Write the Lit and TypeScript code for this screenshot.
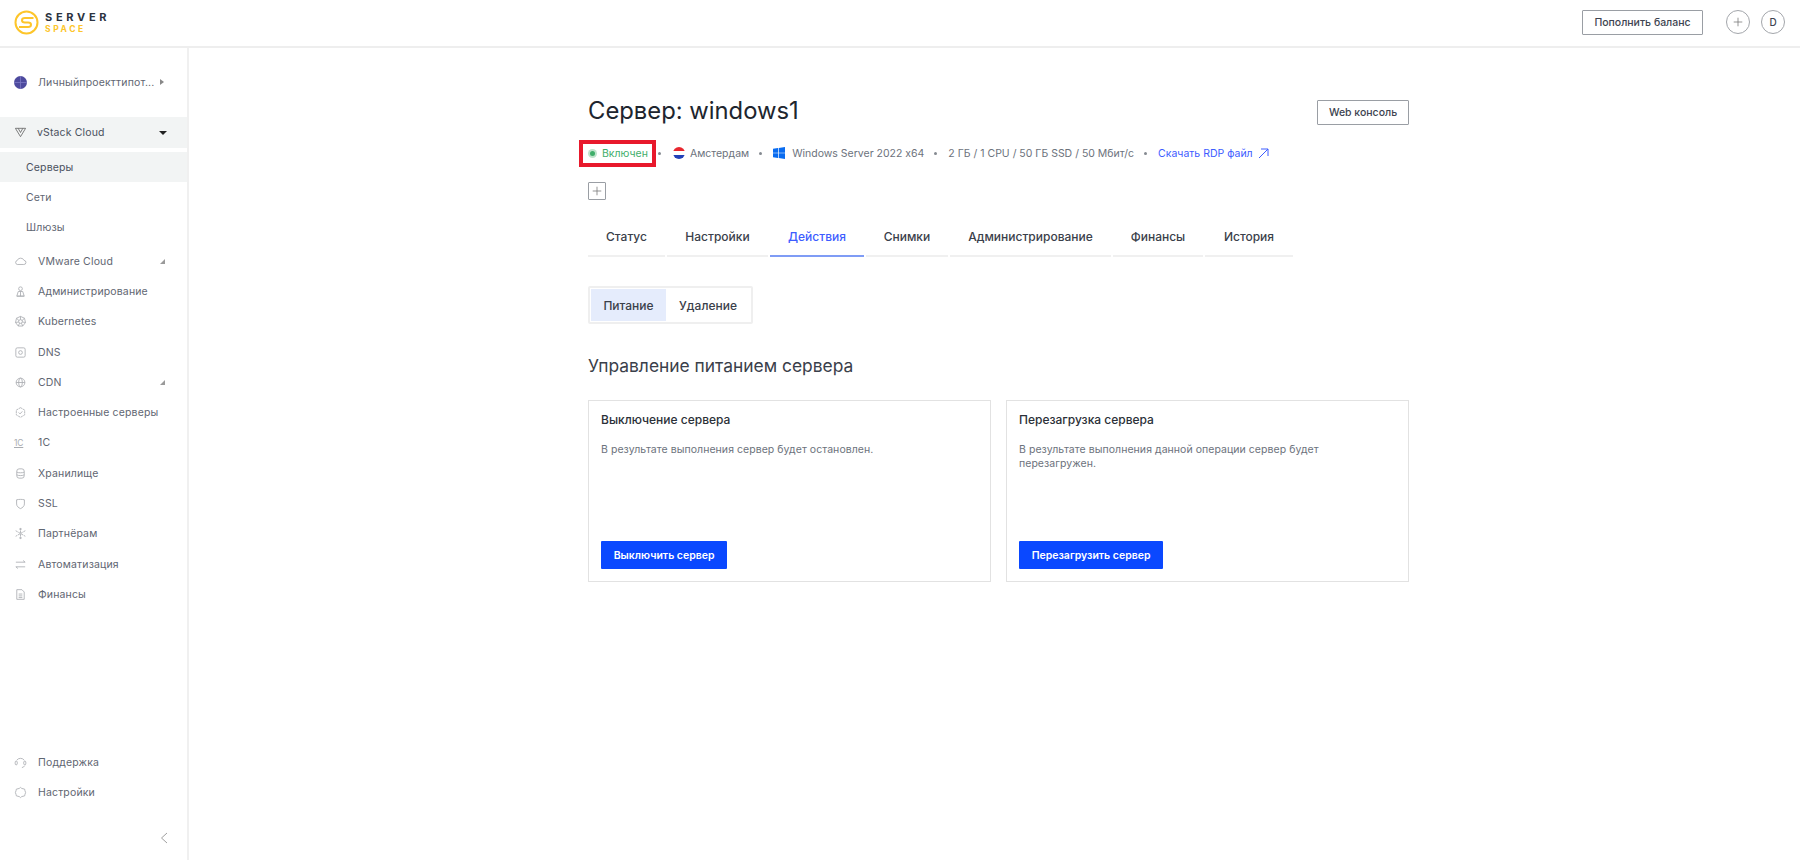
import { LitElement, html, css, svg } from "lit";
import { customElement } from "lit/decorators.js";

const S = (inner: unknown, size = 13) => html`<svg class="ic" width=${size} height=${size} viewBox="0 0 14 14" fill="none" stroke="#a9acb1" stroke-width="0.9">${inner}</svg>`;

const icons: Record<string, unknown> = {
  cloud: svg`<path d="M3.500 10.200h7a2.200 2.200 0 0 0 .3-4.400A3.900 3.900 0 0 0 7 3.400a3.700 3.700 0 0 0-3.500 2.500 2.200 2.200 0 0 0 0 4.300z"/>`,
  admin: svg`<circle cx="7" cy="4" r="2"/><path d="M3 12l1.600-5h4.800L11 12zM3 12h8M7 7v5"/>`,
  k8s: svg`<circle cx="7" cy="7" r="2"/><path d="M7 1.500l4.300 2 1.100 4.600-3 3.800H4.600l-3-3.800 1.100-4.600zM7 1.500V5M2.700 3.500L5.400 6M11.300 3.500L8.600 6M1.600 8.100l3.500-.6M12.400 8.100l-3.500-.6M4.600 11.900L6 8.800M9.400 11.900L8 8.800"/>`,
  dns: svg`<rect x="2" y="2" width="10" height="10" rx="1.500"/><circle cx="7" cy="7" r="2"/>`,
  globe: svg`<circle cx="7" cy="7" r="4.700"/><ellipse cx="7" cy="7" rx="2" ry="4.700"/><path d="M2.300 7h9.400"/>`,
  hex: svg`<path d="M7 1.800l4.500 2.600v5.200L7 12.200 2.500 9.600V4.400z" stroke-dasharray="2.500 .7"/><path d="M5 7l1.500 1.500L9 5.800"/>`,
  db: svg`<rect x="3" y="2" width="8" height="10" rx="2.500"/><path d="M3 5.500c1.500 1 6.500 1 8 0M3 8.500c1.500 1 6.500 1 8 0"/>`,
  shield: svg`<path d="M2.800 3c2.800-.6 5.600-.6 8.400 0v4.500c0 2.500-2 4-4.200 5-2.200-1-4.200-2.500-4.200-5z"/>`,
  snow: svg`<path d="M7 1v12M1.800 4l10.400 6M12.200 4L1.800 10" stroke-dasharray="2.500 .8"/><path d="M5.500 1.800L7 3.200l1.500-1.400M5.500 12.200L7 10.800l1.500 1.400"/>`,
  swap: svg`<path d="M2 4.500h10M9.800 2.700L12 4.500M12 9.500H2M4.200 11.300L2 9.500"/>`,
  doc: svg`<path d="M3 1.800h5.500L11 4.300v7.900H3zM5 6.500h4M5 8.500h4M5 10.300h4"/>`,
  support: svg`<path d="M3 4.500A5 5 0 0 1 11 4.500M11.500 10.500c-.6 1-1.500 1.700-3 2"/><rect x="1.300" y="5.500" width="2.200" height="4" rx="1.100"/><rect x="10.500" y="5.500" width="2.200" height="4" rx="1.100"/>`,
  gear: svg`<path d="M7 1.500l1.300 1.100 3.200.8.300 1.700L12.500 7l-.7 2.100-.3 1.500-3.200.8L7 12.500l-1.300-1.100-3.200-.8-.3-1.500L1.500 7l.7-1.900.3-1.700 3.200-.8z"/>`,
};

const one_c = html`<span class="onec">1C</span>`;

const nav: [string, string, boolean?][] = [
  ["VMware Cloud", "cloud", true],
  ["Администрирование", "admin"],
  ["Kubernetes", "k8s"],
  ["DNS", "dns"],
  ["CDN", "globe", true],
  ["Настроенные серверы", "hex"],
  ["1C", "1c"],
  ["Хранилище", "db"],
  ["SSL", "shield"],
  ["Партнёрам", "snow"],
  ["Автоматизация", "swap"],
  ["Финансы", "doc"],
];

const tabs: [string, number, boolean?][] = [
  ["Статус", 77],
  ["Настройки", 101],
  ["Действия", 94, true],
  ["Снимки", 82],
  ["Администрирование", 161],
  ["Финансы", 90],
  ["История", 88],
];

@customElement("app-root")
export class AppRoot extends LitElement {
  static styles = css`
    :host { display: block; width: 1800px; height: 860px; background: #fff; font-family: Inter, "Noto Sans", sans-serif; font-feature-settings: "calt" 0; overflow: hidden; color: #2b3038; }
    * { box-sizing: border-box; }
    .ic { flex: none; display: block; }
    header { height: 48px; border-bottom: 2px solid #eeeeee; display: flex; align-items: center; padding: 0 15px 2px 14px; }
    .logo { display: flex; align-items: center; gap: 6px; }
    .logo-text { display: flex; flex-direction: column; gap: 3px; }
    .logo-s { font-size: 11px; line-height: 10px; font-weight: 700; letter-spacing: 3.700px; color: #2c3340; }
    .logo-p { font-size: 8.500px; line-height: 8px; font-weight: 700; letter-spacing: 2.600px; color: #fdc52a; }
    .head-right { margin-left: auto; display: flex; align-items: center; }
    .btn-o { height: 25px; border: 1px solid #9a9ea4; border-radius: 1px; background: #fff; font: 500 10.500px Inter, sans-serif; color: #3d4450; display: flex; align-items: center; justify-content: center; }
    .topup { width: 121px; margin-right: 23px; }
    .circle { width: 24px; height: 24px; border: 1px solid #a3a6ab; border-radius: 50%; display: flex; align-items: center; justify-content: center; font-size: 10px; font-weight: 500; color: #3d4450; }
    .circle + .circle { margin-left: 11px; }
    .body { display: flex; height: 812px; }
    aside { width: 189px; border-right: 2px solid #f0f0f0; display: flex; flex-direction: column; flex: none; font-size: 10.500px; color: #5f6672; letter-spacing: .15px; }
    .project { height: 22px; margin-top: 23px; display: flex; align-items: center; padding-left: 14px; gap: 11px; margin-bottom: 24px; letter-spacing: .17px; }
    .tri-r { width: 0; height: 0; border-left: 4px solid #888; border-top: 3.500px solid transparent; border-bottom: 3.500px solid transparent; margin-left: -6px; }
    .vstack { height: 31px; background: #f2f4f4; display: flex; align-items: center; padding: 0 20px 0 14px; gap: 10px; color: #4a515e; }
    .tri-d { width: 0; height: 0; border-top: 4px solid #222; border-left: 4px solid transparent; border-right: 4px solid transparent; margin-left: auto; }
    .sub { height: 30px; display: flex; align-items: center; padding-left: 26px; }
    .sub.on { background: #f2f4f4; margin-top: 4px; color: #4a515e; }
    .subs { margin-bottom: 4px; }
    .item { height: 30.300px; display: flex; align-items: center; padding: 0 22px 0 14px; gap: 11px; }
    .item .tt { flex: none; }
    .corner { width: 0; height: 0; margin-left: auto; border-bottom: 5px solid #9a9a9a; border-left: 5px solid transparent; }
    .onec { width: 13px; flex: none; font-size: 8.500px; color: #a9acb1; letter-spacing: -.2px; text-decoration: underline; }
    .foot { margin-top: auto; }
    .collapse { display: flex; justify-content: flex-end; padding: 24px 19px 0 0; height: 52px; }
    main { flex: 1; padding: 0 0 0 399px; }
    .wrap { width: 821px; }
    .title-row { display: flex; justify-content: space-between; align-items: center; height: 30px; margin-top: 48px; }
    h1 { margin: 0; font-size: 23.800px; font-weight: 400; line-height: 30px; color: #20252e; }
    .web { width: 92px; margin-top: 3px; }
    .meta { position: relative; display: flex; align-items: center; height: 20px; margin-top: 17px; font-size: 10.500px; color: #6c727c; }
    .dot { width: 3px; height: 3px; border-radius: 50%; background: #858a91; margin: 0 11px 0 10px; flex: none; }
    .status { color: #3fae6a; display: flex; align-items: center; gap: 5px; }
    .sd { width: 9px; height: 9px; border-radius: 50%; background: #bfe3cb; display: flex; align-items: center; justify-content: center; }
    .sd i { width: 5px; height: 5px; border-radius: 50%; background: #3fae6a; display: block; }
    .flag { width: 12px; height: 12px; border-radius: 50%; overflow: hidden; flex: none; background: linear-gradient(#e8262e 0 33%, #fff 33% 66%, #2140b8 66%); margin: 0 5px 0 1px; }
    .win { margin: 0 7px 0 0; flex: none; }
    .rdp { color: #3d5cff; display: flex; align-items: center; gap: 5px; }
    .mark { position: absolute; left: -9px; top: -3px; width: 77px; height: 27px; border: 4px solid #e8192c; }
    .plus { width: 18px; height: 18px; border: 1px solid #9a9ea4; border-radius: 1px; margin-top: 19px; display: flex; align-items: center; justify-content: center; }
    .tabs { display: flex; gap: 2px; margin-top: 19px; }
    .tab { height: 38px; padding-bottom: 1px; display: flex; align-items: center; justify-content: center; border-bottom: 2px solid #f0f0f0; font-size: 12px; color: #3a404a; font-weight: 500; flex: none; }
    .tab.on { color: #3d5cff; border-bottom-color: #7f9cf5; }
    .seg { display: inline-flex; margin-top: 29px; border: 2px solid #efefef; border-radius: 2px; height: 38px; width: 165px; padding: 1px; }
    .seg div { display: flex; align-items: center; justify-content: center; font-size: 12px; font-weight: 500; color: #3a404a; }
    .seg .a { width: 75px; background: #e5ecfc; }
    .seg .b { flex: 1; }
    h2 { margin: 28px 0 0; font-size: 17.400px; line-height: 28px; font-weight: 400; color: #3a404a; }
    .cards { display: grid; grid-template-columns: 403px 403px; gap: 15px; margin-top: 20px; }
    .card { height: 182px; border: 1px solid #e2e2e2; padding: 10px 12px 12px; display: flex; flex-direction: column; align-items: flex-start; }
    .card h3 { margin: 0; font-size: 12px; line-height: 18px; font-weight: 500; color: #2b3038; }
    .card p { margin: 14px 0 0; font-size: 10.500px; line-height: 14px; width: 340px; color: #6c727c; letter-spacing: .05px; }
    .go { margin-top: auto; height: 28px; background: #0a48ff; color: #fff; border-radius: 1px; font-size: 10.500px; font-weight: 600; display: flex; align-items: center; padding: 0 12.700px; }
  `;

  render() {
    return html`
      <header>
        <div class="logo">
          <svg width="25" height="25" viewBox="0 0 25 25" fill="none" stroke="#fdc52a" stroke-width="2"><circle cx="12.500" cy="12.500" r="11"/><path d="M19.500 8H11C7 8 7 12.500 11 12.500H14C18 12.500 18 17 14 17H5"/></svg>
          <div class="logo-text"><span class="logo-s">SERVER</span><span class="logo-p">SPACE</span></div>
        </div>
        <div class="head-right">
          <div class="btn-o topup">Пополнить баланс</div>
          <div class="circle">${S(svg`<path d="M7 2v10M2 7h10" stroke="#777"/>`, 12)}</div>
          <div class="circle">D</div>
        </div>
      </header>
      <div class="body">
        <aside>
          <div class="project">
            <svg width="13" height="13" viewBox="0 0 13 13" class="ic"><circle cx="6.500" cy="6.500" r="6.500" fill="#4d4a9e"/><path d="M6.500 0v13M0 6.500h13" stroke="#7c79c4" stroke-width=".8"/></svg>
            <span>Личныйпроекттипот...</span><span class="tri-r"></span>
          </div>
          <div class="vstack">
            ${S(svg`<path d="M1.500 2.500h11L7 11.500zM4.500 2.500L7 7l2.500-4.500" stroke="#666"/>`)}
            <span>vStack Cloud</span><span class="tri-d"></span>
          </div>
          <div class="subs">
            <div class="sub on">Серверы</div>
            <div class="sub">Сети</div>
            <div class="sub">Шлюзы</div>
          </div>
          ${nav.map(([t, i, c]) => html`<div class="item">${i === "1c" ? one_c : S(icons[i])}<span class="tt">${t}</span>${c ? html`<span class="corner"></span>` : ""}</div>`)}
          <div class="foot">
            <div class="item">${S(icons.support)}<span class="tt">Поддержка</span></div>
            <div class="item">${S(icons.gear)}<span class="tt">Настройки</span></div>
            <div class="collapse"><svg width="8" height="12" viewBox="0 0 8 12" fill="none" stroke="#a0a0a0"><path d="M7 1L1.500 6 7 11"/></svg></div>
          </div>
        </aside>
        <main>
          <div class="wrap">
            <div class="title-row">
              <h1>Сервер: windows1</h1>
              <div class="btn-o web">Web консоль</div>
            </div>
            <div class="meta">
              <span class="status"><span class="sd"><i></i></span>Включен</span>
              <span class="dot"></span>
              <span class="flag"></span><span>Амстердам</span>
              <span class="dot"></span>
              <svg class="win" width="12" height="12" viewBox="0 0 12 12" fill="#0a6cf0"><path d="M0 1.700l5-.7v4.700H0zM5.700.9L12 0v5.700H5.700zM0 6.300h5V11l-5-.7zM5.700 6.300H12V12l-6.300-.9z"/></svg>
              <span>Windows Server 2022 x64</span>
              <span class="dot"></span>
              <span>2 ГБ / 1 CPU / 50 ГБ SSD / 50 Мбит/с</span>
              <span class="dot"></span>
              <span class="rdp">Скачать RDP файл <svg width="11" height="11" viewBox="0 0 11 11" fill="none" stroke="#3d5cff"><path d="M1 10L10 1M3 1h7v7"/></svg></span>
              <span class="mark"></span>
            </div>
            <div class="plus">${S(svg`<path d="M7 2v10M2 7h10" stroke="#777"/>`, 12)}</div>
            <div class="tabs">
              ${tabs.map(([t, w, on]) => html`<div class="tab ${on ? "on" : ""}" style="width:${w}px">${t}</div>`)}
            </div>
            <div class="seg"><div class="a">Питание</div><div class="b">Удаление</div></div>
            <h2>Управление питанием сервера</h2>
            <div class="cards">
              <div class="card">
                <h3>Выключение сервера</h3>
                <p>В результате выполнения сервер будет остановлен.</p>
                <div class="go">Выключить сервер</div>
              </div>
              <div class="card">
                <h3>Перезагрузка сервера</h3>
                <p>В результате выполнения данной операции сервер будет перезагружен.</p>
                <div class="go">Перезагрузить сервер</div>
              </div>
            </div>
          </div>
        </main>
      </div>
    `;
  }
}
